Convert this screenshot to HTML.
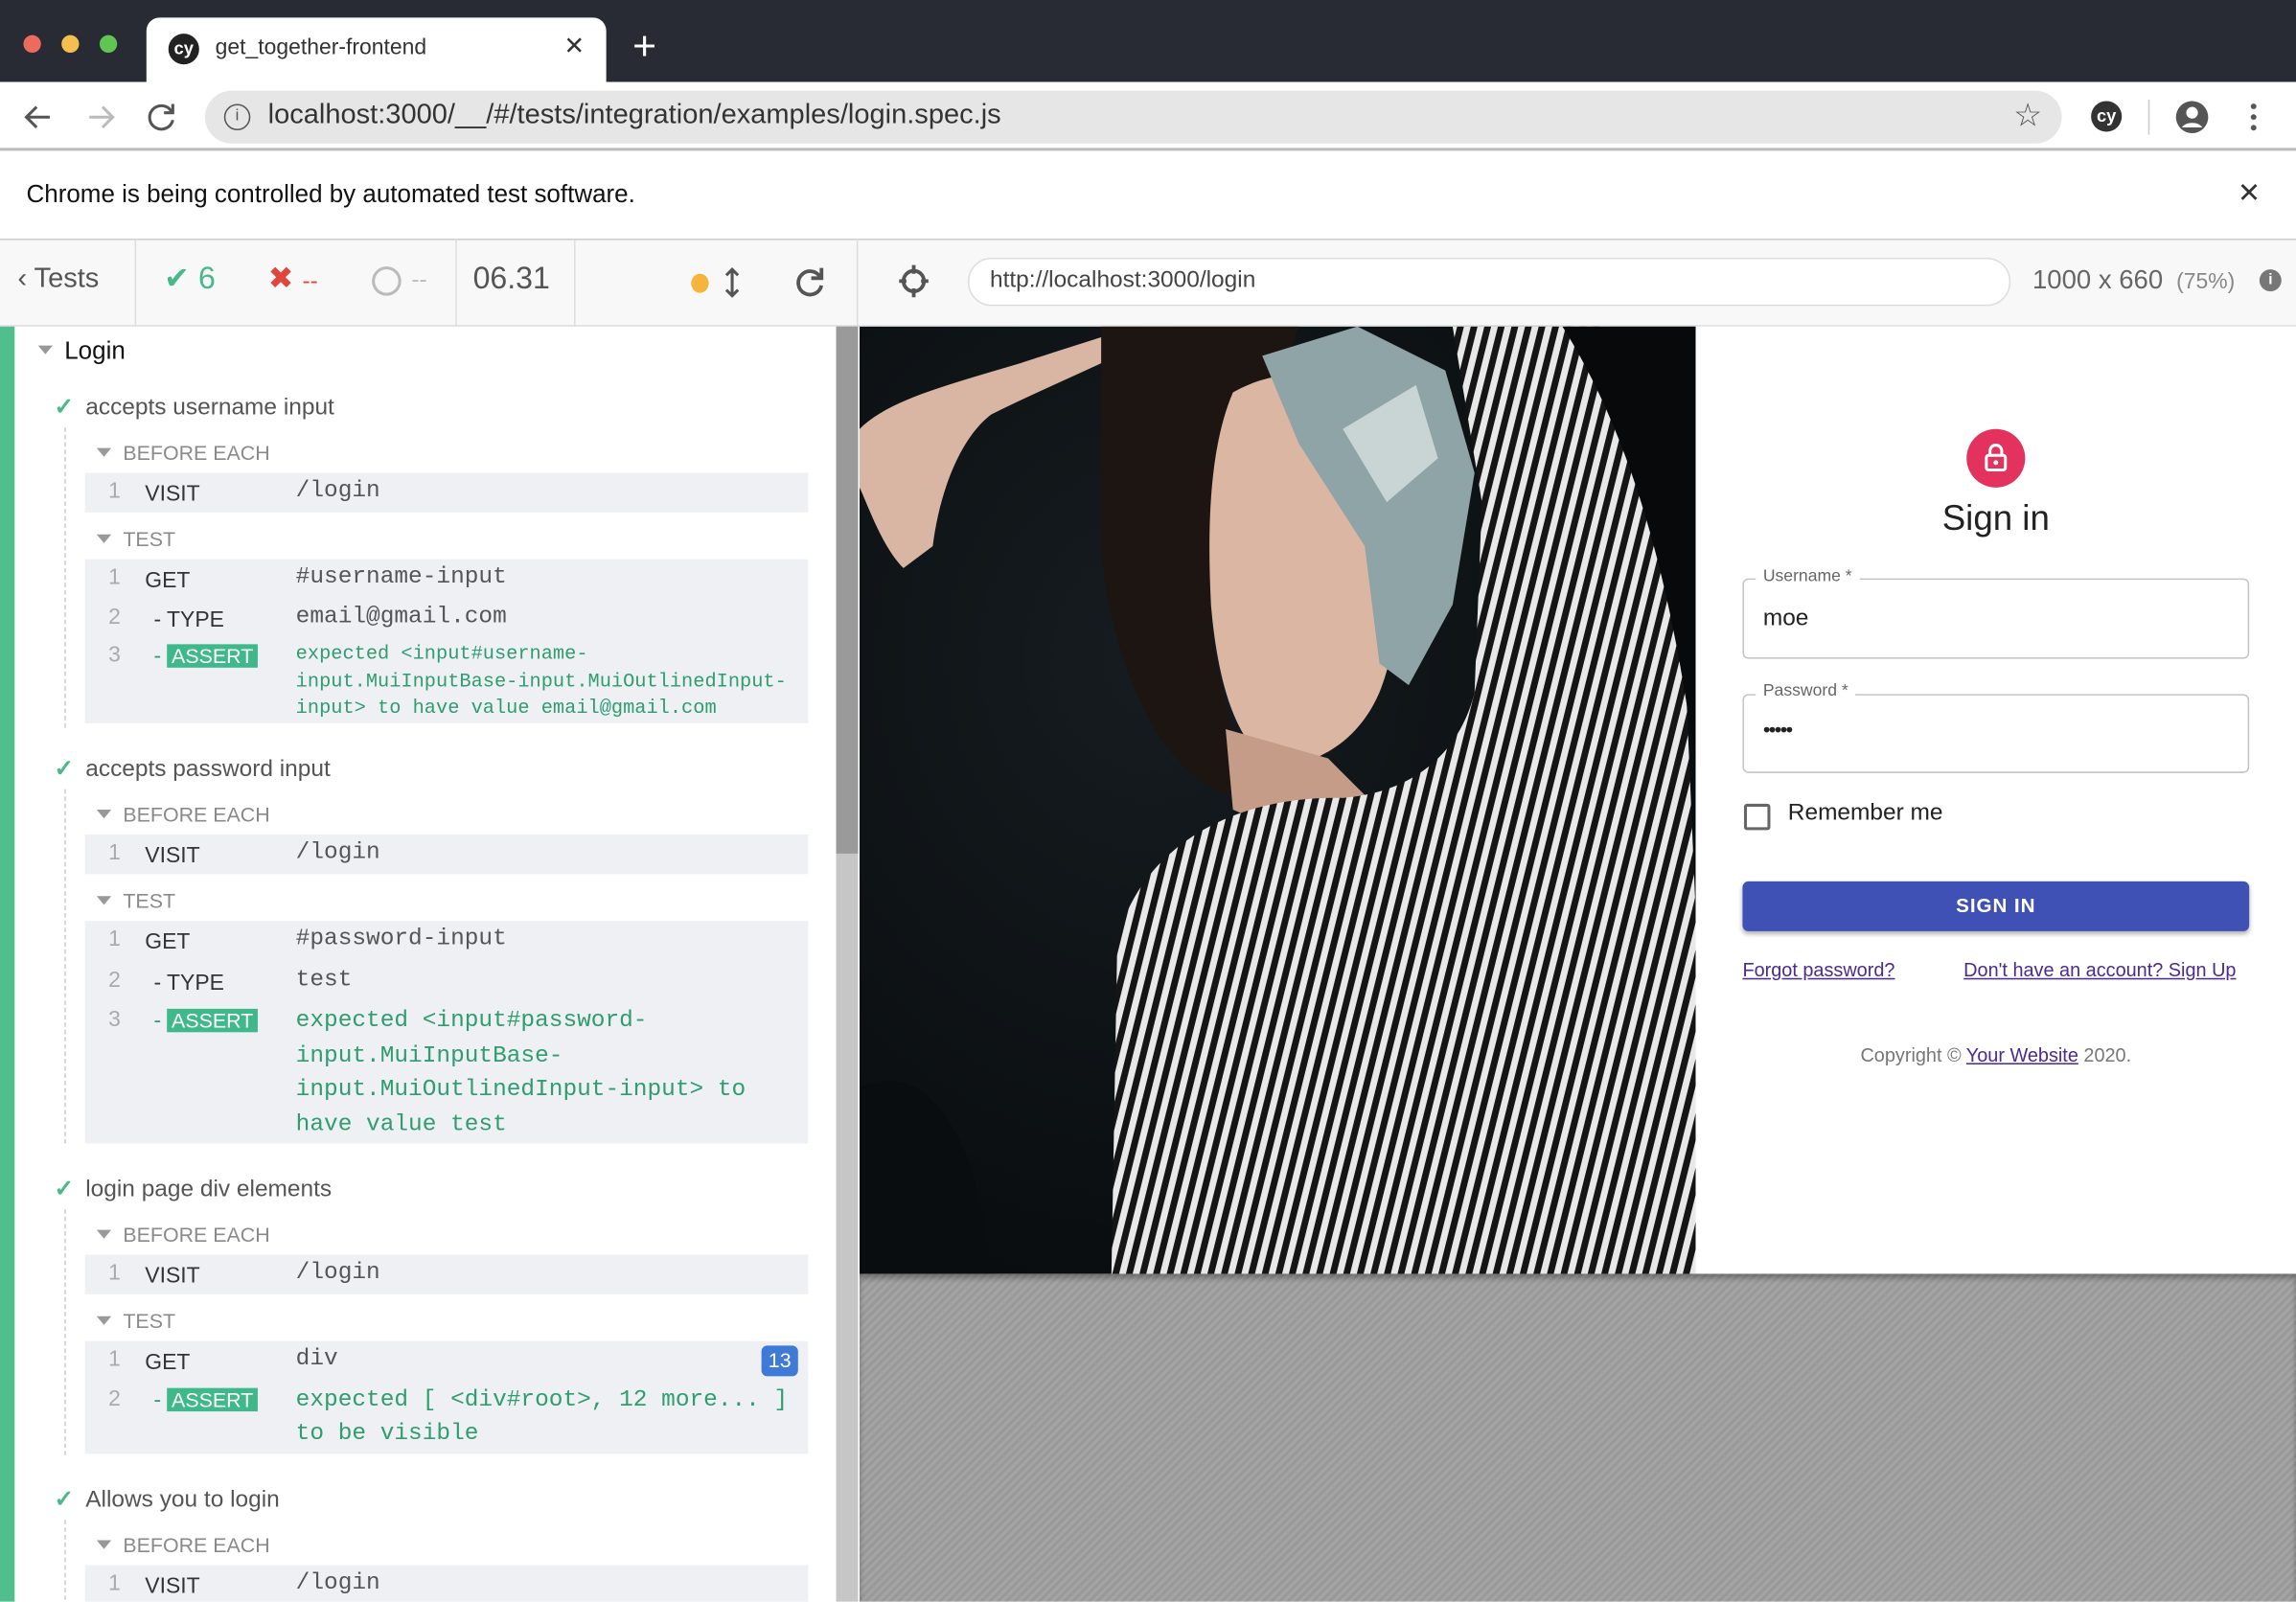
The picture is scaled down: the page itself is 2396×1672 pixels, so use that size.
<!DOCTYPE html>
<html><head><meta charset="utf-8"><style>
*{box-sizing:border-box;margin:0;padding:0}
html,body{width:2396px;height:1672px;overflow:hidden;background:#fff}
#w{width:1568px;height:1094px;transform:scale(1.5281);transform-origin:0 0;position:relative;font-family:"Liberation Sans",sans-serif;overflow:hidden}
.a{position:absolute;white-space:nowrap}
.mono{font-family:"Liberation Mono",monospace}
.box{position:absolute;left:58px;width:494px;background:#eef0f4}
.sec{position:absolute;left:66px;font-size:14px;color:#8a8a8a}
.sec:before{content:"";display:inline-block;border-left:5px solid transparent;border-right:5px solid transparent;border-top:6px solid #999;margin-right:8px;vertical-align:2px}
.ttl{position:absolute;left:37px;font-size:16px;color:#555}
.ttl b{color:#4ab98a;font-weight:bold;margin-right:8px}
.n{color:#aaa;font-size:15px}
.cmd{font-size:15px;color:#333}
.arg{font-size:16px;color:#555}
.as{background:#3fb88a;color:#fff;padding:0 3px;font-size:14px}
.g{color:#2f9d6e}
.dash{position:absolute;left:44px;border-left:1px dashed #ccc}
</style></head><body><div id="w">
<!-- tab bar -->
<div class="a" style="left:0;top:0;width:1568px;height:56px;background:#282b33"></div>
<div class="a" style="left:16px;top:24px;width:12px;height:12px;border-radius:50%;background:#ec6a5e"></div>
<div class="a" style="left:42px;top:24px;width:12px;height:12px;border-radius:50%;background:#f4bf4f"></div>
<div class="a" style="left:68px;top:24px;width:12px;height:12px;border-radius:50%;background:#61c554"></div>
<div class="a" style="left:100px;top:12px;width:314px;height:46px;background:#fff;border-radius:9px 9px 0 0"></div>
<div class="a" style="left:115px;top:23px;width:21px;height:21px;border-radius:50%;background:#222;color:#fff;font-size:12px;font-weight:bold;text-align:center;line-height:20px">cy</div>
<div class="a" style="left:147px;top:24px;font-size:15px;color:#333">get_together-frontend</div>
<div class="a" style="left:385px;top:22px;font-size:17px;color:#333">✕</div>
<div class="a" style="left:432px;top:16px;font-size:28px;color:#fff;font-weight:300">+</div>
<!-- url bar -->
<div class="a" style="left:0;top:56px;width:1568px;height:47px;background:#fff;border-bottom:2px solid #bbb"></div>
<svg class="a" style="left:14px;top:68px" width="110" height="24" viewBox="0 0 110 24" fill="none" stroke-width="2"><path d="M20 12H5M11 5L4 12l7 7" stroke="#555"/><path d="M47 12h15M56 5l7 7-7 7" stroke="#bbb"/><path d="M103 8a8 8 0 1 0 1 6M104 3v6h-6" stroke="#555"/></svg>
<div class="a" style="left:140px;top:62px;width:1268px;height:36px;border-radius:18px;background:#e6e6e6"></div>
<div class="a" style="left:153px;top:71px;width:18px;height:18px;border:1.5px solid #555;border-radius:50%;font-size:11px;text-align:center;line-height:15px;color:#555">i</div>
<div class="a" style="left:183px;top:68px;font-size:19px;color:#333">localhost:3000/__/#/tests/integration/examples/login.spec.js</div>
<div class="a" style="left:1375px;top:66px;font-size:22px;color:#555">☆</div>
<div class="a" style="left:1428px;top:69px;width:21px;height:21px;border-radius:50%;background:#333;color:#fff;font-size:12px;font-weight:bold;text-align:center;line-height:20px">cy</div>
<div class="a" style="left:1467px;top:68px;width:1px;height:24px;background:#ccc"></div>
<svg class="a" style="left:1485px;top:68px" width="24" height="24"><circle cx="12" cy="12" r="11" fill="#555"/><circle cx="12" cy="9" r="4" fill="#fff"/><path d="M5 19a8 6 0 0 1 14 0" fill="#fff"/></svg>
<div class="a" style="left:1537px;top:69px;width:4px;height:22px;background:radial-gradient(circle,#555 1.8px,transparent 2px) 0 0/4px 7.3px"></div>
<!-- info bar -->
<div class="a" style="left:18px;top:123px;font-size:17px;color:#111">Chrome is being controlled by automated test software.</div>
<div class="a" style="left:1528px;top:121px;font-size:19px;color:#333">✕</div>
<!-- cypress header -->
<div class="a" style="left:0;top:163px;width:1568px;height:60px;background:#f8f8f8;border-top:1px solid #ccc;border-bottom:1px solid #ddd"></div>
<div class="a" style="left:12px;top:180px;font-size:19px;color:#555">‹ Tests</div>
<div class="a" style="left:92px;top:163px;width:1px;height:60px;background:#ddd"></div>
<div class="a" style="left:112px;top:178px;font-size:21px;color:#4ab98a">✔ 6</div>
<div class="a" style="left:183px;top:178px;font-size:21px;color:#e0463c">✖ <span style="font-size:16px">--</span></div>
<div class="a" style="left:254px;top:182px;width:20px;height:20px;border:2.5px solid #bbb;border-radius:50%"></div>
<div class="a" style="left:281px;top:183px;font-size:16px;color:#bbb">--</div>
<div class="a" style="left:311px;top:163px;width:1px;height:60px;background:#ddd"></div>
<div class="a" style="left:323px;top:179px;font-size:21px;color:#555">06.31</div>
<div class="a" style="left:392px;top:163px;width:1px;height:60px;background:#ddd"></div>
<div class="a" style="left:472px;top:187px;width:12px;height:13px;border-radius:50%;background:#f5b43c"></div>
<svg class="a" style="left:494px;top:182px" width="12" height="22"><path d="M6 2v18M2 6l4-4 4 4M2 16l4 4 4-4" stroke="#555" stroke-width="2" fill="none"/></svg>
<svg class="a" style="left:542px;top:181px" width="22" height="22"><path d="M18 8a8 8 0 1 0 1 6M19 2v7h-7" stroke="#555" stroke-width="2.5" fill="none"/></svg>
<div class="a" style="left:585px;top:163px;width:1px;height:60px;background:#ddd"></div>
<svg class="a" style="left:613px;top:180px" width="22" height="24"><circle cx="11" cy="12" r="7" stroke="#555" stroke-width="2.5" fill="none"/><path d="M11 1v6M11 17v6M1 12h5M16 12h5" stroke="#555" stroke-width="2.5"/></svg>
<div class="a" style="left:661px;top:176px;width:712px;height:33px;border:1px solid #ddd;border-radius:16px;background:#fff"></div>
<div class="a" style="left:676px;top:183px;font-size:16px;color:#444">http://localhost:3000/login</div>
<div class="a" style="left:1388px;top:181px;font-size:18px;color:#666">1000 x 660 <span style="font-size:15px;color:#888">&nbsp;(75%)</span></div>
<div class="a" style="left:1543px;top:184px;width:15px;height:15px;border-radius:50%;background:#777;color:#fff;font-size:10px;text-align:center;line-height:15px;font-weight:bold">i</div>
<!-- left panel -->
<div class="a" style="left:0;top:223px;width:10px;height:871px;background:#50bf8e"></div>
<div class="a" style="left:571px;top:223px;width:15px;height:871px;background:#c6c6c6"></div>
<div class="a" style="left:571px;top:223px;width:15px;height:360px;background:#9a9a9a"></div>
<div class="a" style="left:26px;top:236px;border-left:5px solid transparent;border-right:5px solid transparent;border-top:6px solid #999"></div>
<div class="a" style="left:44px;top:230px;font-size:17px;color:#111">Login</div>

<div class="ttl" style="top:268px"><b>✓</b>accepts username input</div>
<div class="dash" style="top:292px;height:205px"></div>
<div class="sec" style="top:301px">BEFORE EACH</div>
<div class="box" style="top:323px;height:27px"></div>
<div class="a n" style="left:74px;top:327px">1</div><div class="a cmd" style="left:99px;top:329px">VISIT</div><div class="a arg mono" style="left:202px;top:326px">/login</div>
<div class="sec" style="top:360px">TEST</div>
<div class="box" style="top:382px;height:112px"></div>
<div class="a n" style="left:74px;top:386px">1</div><div class="a cmd" style="left:99px;top:388px">GET</div><div class="a arg mono" style="left:202px;top:385px">#username-input</div>
<div class="a n" style="left:74px;top:413px">2</div><div class="a cmd" style="left:105px;top:415px">- TYPE</div><div class="a arg mono" style="left:202px;top:412px">email@gmail.com</div>
<div class="a n" style="left:74px;top:439px">3</div><div class="a cmd g" style="left:105px;top:440px">- <span class="as">ASSERT</span></div>
<div class="a mono g" style="left:202px;top:438px;font-size:13.3px;line-height:18.5px">expected &lt;input#username-<br>input.MuiInputBase-input.MuiOutlinedInput-<br>input&gt; to have value email@gmail.com</div>

<div class="ttl" style="top:515px"><b>✓</b>accepts password input</div>
<div class="dash" style="top:539px;height:242px"></div>
<div class="sec" style="top:548px">BEFORE EACH</div>
<div class="box" style="top:570px;height:27px"></div>
<div class="a n" style="left:74px;top:574px">1</div><div class="a cmd" style="left:99px;top:576px">VISIT</div><div class="a arg mono" style="left:202px;top:573px">/login</div>
<div class="sec" style="top:607px">TEST</div>
<div class="box" style="top:629px;height:152px"></div>
<div class="a n" style="left:74px;top:633px">1</div><div class="a cmd" style="left:99px;top:635px">GET</div><div class="a arg mono" style="left:202px;top:632px">#password-input</div>
<div class="a n" style="left:74px;top:661px">2</div><div class="a cmd" style="left:105px;top:663px">- TYPE</div><div class="a arg mono" style="left:202px;top:660px">test</div>
<div class="a n" style="left:74px;top:688px">3</div><div class="a cmd g" style="left:105px;top:689px">- <span class="as">ASSERT</span></div>
<div class="a mono g" style="left:202px;top:686px;font-size:16px;line-height:23.5px">expected &lt;input#password-<br>input.MuiInputBase-<br>input.MuiOutlinedInput-input&gt; to<br>have value test</div>

<div class="ttl" style="top:802px"><b>✓</b>login page div elements</div>
<div class="dash" style="top:826px;height:168px"></div>
<div class="sec" style="top:835px">BEFORE EACH</div>
<div class="box" style="top:857px;height:27px"></div>
<div class="a n" style="left:74px;top:861px">1</div><div class="a cmd" style="left:99px;top:863px">VISIT</div><div class="a arg mono" style="left:202px;top:860px">/login</div>
<div class="sec" style="top:894px">TEST</div>
<div class="box" style="top:916px;height:77px"></div>
<div class="a n" style="left:74px;top:920px">1</div><div class="a cmd" style="left:99px;top:922px">GET</div><div class="a arg mono" style="left:202px;top:919px">div</div>
<div class="a" style="left:520px;top:919px;width:25px;height:21px;border-radius:4px;background:#3f7bd6;color:#fff;font-size:14px;text-align:center;line-height:21px">13</div>
<div class="a n" style="left:74px;top:947px">2</div><div class="a cmd g" style="left:105px;top:948px">- <span class="as">ASSERT</span></div>
<div class="a mono g" style="left:202px;top:945px;font-size:16px;line-height:23px">expected [ &lt;div#root&gt;, 12 more... ]<br>to be visible</div>

<div class="ttl" style="top:1014px"><b>✓</b>Allows you to login</div>
<div class="dash" style="top:1038px;height:60px"></div>
<div class="sec" style="top:1047px">BEFORE EACH</div>
<div class="box" style="top:1069px;height:27px"></div>
<div class="a n" style="left:74px;top:1073px">1</div><div class="a cmd" style="left:99px;top:1075px">VISIT</div><div class="a arg mono" style="left:202px;top:1072px">/login</div>

<!-- right: photo -->
<svg class="a" style="left:587px;top:223px" width="571" height="647" viewBox="0 0 571 647">
<defs><pattern id="st" width="9" height="9" patternUnits="userSpaceOnUse" patternTransform="rotate(14)"><rect width="9" height="9" fill="#e8e8e8"/><rect width="4.5" height="9" fill="#151515"/></pattern>
<radialGradient id="bg" cx="0.35" cy="0.35" r="0.9"><stop offset="0" stop-color="#161c20"/><stop offset="1" stop-color="#05080a"/></radialGradient></defs>
<rect width="571" height="647" fill="url(#bg)"/>
<path d="M0 70 C20 50 60 40 110 25 C150 12 175 4 190 0 L215 0 C180 20 130 40 90 60 C70 75 55 110 50 150 L30 165 C15 150 5 120 0 110Z" fill="#d9b6a3"/>
<path d="M165 0 L300 0 L290 30 C250 60 235 130 240 200 C245 260 270 300 250 320 C200 300 170 220 165 150Z" fill="#1c1512"/>
<path d="M255 45 C290 25 330 30 355 60 C375 110 375 200 355 250 C340 285 310 300 285 300 C260 290 245 250 240 190 C237 130 240 80 255 45Z" fill="#dbb6a3"/>
<path d="M275 20 L340 0 L400 30 L420 100 L405 190 L375 245 L355 230 L345 150 L300 80Z" fill="#8ea4a7"/>
<path d="M330 70 L380 40 L395 90 L360 120Z" fill="#c9d4d5"/>
<path d="M250 275 L320 295 L345 320 L290 345 L255 330Z" fill="#c49c88"/>
<path d="M172 647 L176 420 C190 360 250 320 330 322 C380 318 410 290 420 250 L425 120 L405 0 L510 0 C540 60 560 140 565 260 L571 400 L571 647Z" fill="url(#st)"/>
<path d="M480 0 L571 0 L571 300 C555 180 530 80 480 0Z" fill="#07090b"/>
<path d="M0 520 C40 500 80 540 90 647 L0 647Z" fill="#0a0d10"/>
</svg>
<!-- form -->
<div class="a" style="left:1158px;top:223px;width:410px;height:647px;background:#fff"></div>
<div class="a" style="left:1343px;top:293px;width:40px;height:40px;border-radius:50%;background:#e2325d"></div>
<svg class="a" style="left:1353px;top:301px" width="20" height="22"><path d="M6 10V7a4 4 0 0 1 8 0v3" stroke="#fff" stroke-width="2" fill="none"/><rect x="3.5" y="10" width="13" height="10" rx="1.5" stroke="#fff" stroke-width="2" fill="none"/><circle cx="10" cy="15" r="1.6" fill="#fff"/></svg>
<div class="a" style="left:1158px;width:410px;top:341px;text-align:center;font-size:24px;color:#222">Sign in</div>
<div class="a" style="left:1190px;top:395px;width:346px;height:55px;border:1px solid #c4c4c4;border-radius:4px"></div>
<div class="a" style="left:1199px;top:388px;padding:0 5px;background:#fff;font-size:11.5px;color:#666">Username *</div>
<div class="a" style="left:1204px;top:414px;font-size:16px;color:#222">moe</div>
<div class="a" style="left:1190px;top:474px;width:346px;height:54px;border:1px solid #c4c4c4;border-radius:4px"></div>
<div class="a" style="left:1199px;top:466px;padding:0 5px;background:#fff;font-size:11.5px;color:#666">Password *</div>
<div class="a" style="left:1204px;top:490px;font-size:14px;color:#222;letter-spacing:-1px">•••••</div>
<div class="a" style="left:1191px;top:549px;width:18px;height:18px;border:2px solid #666;border-radius:2px"></div>
<div class="a" style="left:1221px;top:547px;font-size:16px;color:#222">Remember me</div>
<div class="a" style="left:1190px;top:602px;width:346px;height:34px;background:#3f51b5;border-radius:4px;box-shadow:0 2px 3px rgba(0,0,0,.3);color:#fff;font-size:13.5px;font-weight:bold;text-align:center;line-height:34px;letter-spacing:.6px">SIGN IN</div>
<div class="a" style="left:1190px;top:655px;font-size:13px;color:#4b2a91;text-decoration:underline">Forgot password?</div>
<div class="a" style="left:1341px;top:655px;font-size:13px;color:#4b2a91;text-decoration:underline">Don't have an account? Sign Up</div>
<div class="a" style="left:1158px;width:410px;top:713px;text-align:center;font-size:13px;color:#777">Copyright © <span style="color:#4b2a91;text-decoration:underline">Your Website</span> 2020.</div>
<!-- hatched -->
<div class="a" style="left:587px;top:870px;width:981px;height:224px;background:repeating-linear-gradient(-45deg,#a4a4a4 0 2px,#999 2px 4px);box-shadow:inset 0 3px 4px rgba(0,0,0,.3)"></div>
</div></body></html>
